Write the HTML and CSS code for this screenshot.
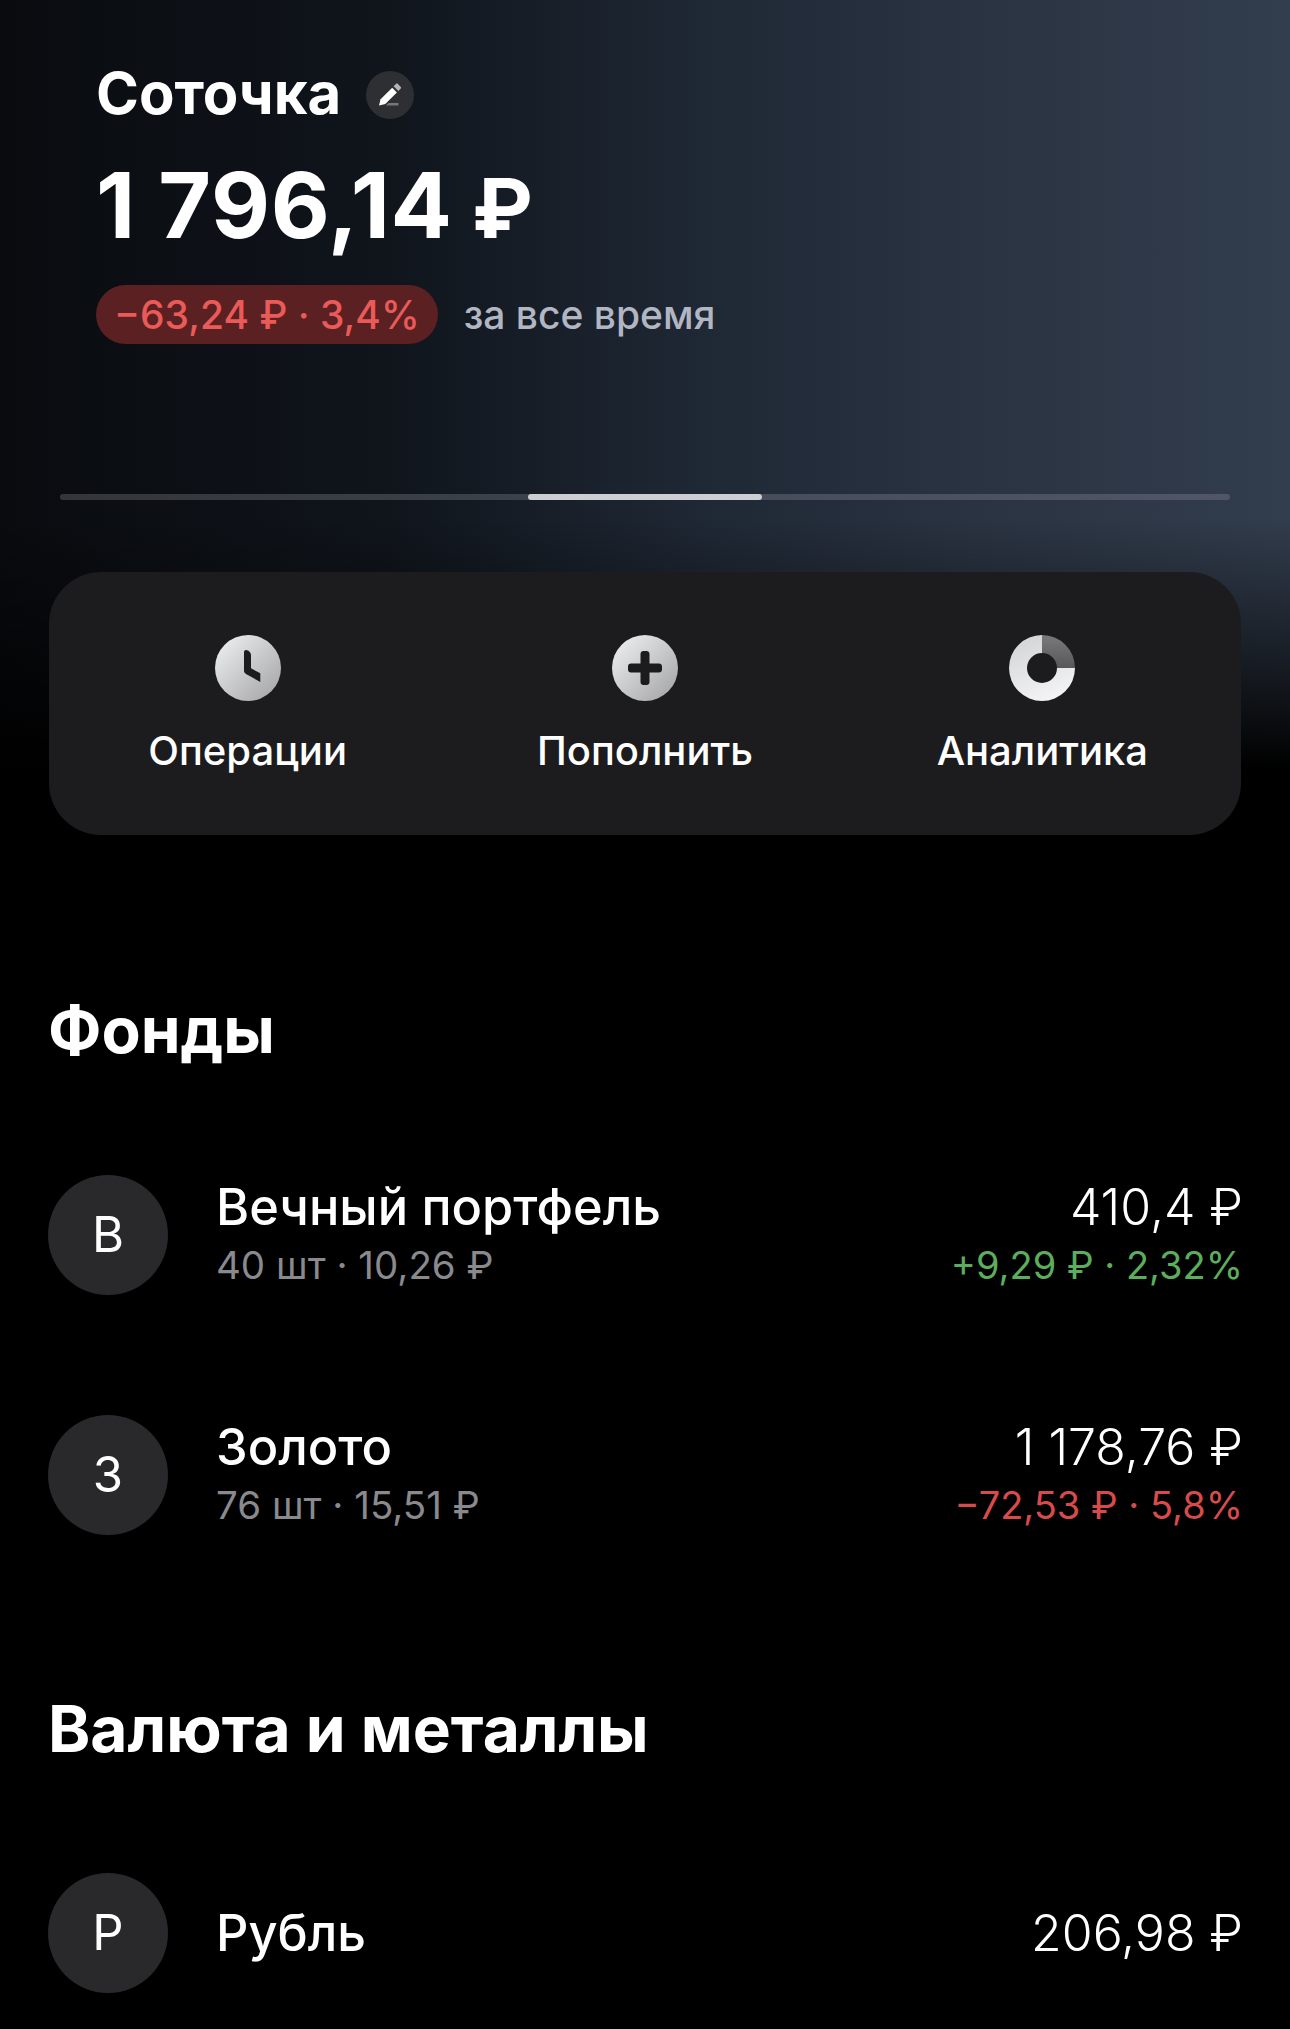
FILE: index.html
```html
<!DOCTYPE html>
<html lang="ru">
<head>
<meta charset="UTF-8">
<meta name="viewport" content="width=device-width, initial-scale=1.0">
<title>Соточка</title>
<link rel="stylesheet" href="styles.css">
</head>
<body>
    <section class="hero">
        <div class="summary">
            <div class="title-row">
                <h1>Соточка</h1>
                <span class="edit-btn">
                    <svg width="48" height="48" viewBox="0 0 48 48">
                        <path d="M13 34.500l1.600-6.200 11.600-11.600 4.700 4.700-11.600 11.600z" fill="#fff"/>
                        <path d="M27.600 15.300l2.300-2.300c.6-.6 1.400-.6 2 0l2.700 2.700c.6.600.6 1.400 0 2l-2.300 2.300z" fill="#b4b4b8"/>
                        <path d="M22.500 32h10v2.600h-12.600z" fill="#77777b"/>
                    </svg>
                </span>
            </div>
            <div class="total">1 796,14 <span class="total-rub">₽</span></div>
            <div class="change-row">
                <span class="change-pill">−63,24 ₽ · 3,4%</span>
                <span class="change-note">за все время</span>
            </div>
        </div>

        <div class="slider">
            <div class="slider-thumb"></div>
        </div>

        <div class="actions">
            <div class="action">
                <svg class="action-icon" width="66" height="66" viewBox="0 0 66 66">
                    <defs>
                        <linearGradient id="metal" x1="0.1" y1="0.1" x2="0.9" y2="0.9">
                            <stop offset="0" stop-color="#e9ebed"/>
                            <stop offset="1" stop-color="#a9a9ab"/>
                        </linearGradient>
                        <linearGradient id="donut-light" x1="0.2" y1="0" x2="0.6" y2="1">
                            <stop offset="0" stop-color="#d2d4d6"/>
                            <stop offset="1" stop-color="#f4f4f6"/>
                        </linearGradient>
                        <linearGradient id="donut-dark" x1="0" y1="0" x2="0" y2="1">
                            <stop offset="0" stop-color="#7a7a7c"/>
                            <stop offset="1" stop-color="#58585a"/>
                        </linearGradient>
                    </defs>
                    <circle cx="33" cy="33" r="33" fill="url(#metal)"/>
                    <path d="M29 17c0-1.200 1-2 2-2 2.800.2 5 2.500 5 5.300v13l9.300 5V47L31 39c-1.300-.7-2-1.800-2-3.200z" fill="#1c1c1e"/>
                </svg>
                <span class="action-label">Операции</span>
            </div>
            <div class="action">
                <svg class="action-icon" width="66" height="66" viewBox="0 0 66 66">
                    <circle cx="33" cy="33" r="33" fill="url(#metal)"/>
                    <path d="M28.500 19c0-1.700 1.300-3 3-3h3c1.700 0 3 1.300 3 3v9.500H47c1.700 0 3 1.300 3 3v3c0 1.700-1.300 3-3 3h-9.500V47c0 1.700-1.300 3-3 3h-3c-1.700 0-3-1.300-3-3v-9.500H19c-1.700 0-3-1.300-3-3v-3c0-1.700 1.300-3 3-3h9.500z" fill="#1c1c1e"/>
                </svg>
                <span class="action-label">Пополнить</span>
            </div>
            <div class="action">
                <svg class="action-icon" width="66" height="66" viewBox="0 0 66 66">
                    <path d="M33 0a33 33 0 1 0 33 33H48a15 15 0 1 1-15-15z" fill="url(#donut-light)"/>
                    <path d="M33 0a33 33 0 0 1 33 33H48a15 15 0 0 0-15-15z" fill="url(#donut-dark)"/>
                </svg>
                <span class="action-label">Аналитика</span>
            </div>
        </div>
    </section>

    <section class="group group-funds">
        <h2>Фонды</h2>
        <div class="asset">
            <div class="avatar">В</div>
            <div class="asset-info">
                <div class="asset-name">Вечный портфель</div>
                <div class="asset-sub">40 шт · 10,26 ₽</div>
            </div>
            <div class="asset-values">
                <div class="asset-price">410,4 ₽</div>
                <div class="asset-delta up">+9,29 ₽ · 2,32%</div>
            </div>
        </div>
        <div class="asset">
            <div class="avatar">З</div>
            <div class="asset-info">
                <div class="asset-name">Золото</div>
                <div class="asset-sub">76 шт · 15,51 ₽</div>
            </div>
            <div class="asset-values">
                <div class="asset-price">1 178,76 ₽</div>
                <div class="asset-delta down">−72,53 ₽ · 5,8%</div>
            </div>
        </div>
    </section>

    <section class="group group-currency">
        <h2>Валюта и металлы</h2>
        <div class="asset">
            <div class="avatar">Р</div>
            <div class="asset-info">
                <div class="asset-name">Рубль</div>
            </div>
            <div class="asset-values">
                <div class="asset-price">206,98 ₽</div>
            </div>
        </div>
    </section>
</body>
</html>
```
FILE: styles.css
```css
html, body {
    margin: 0;
    padding: 0;
    height: 2029px;
    overflow: hidden;
    background-color: #000;
}

body {
    font-family: Inter, "Noto Sans", sans-serif;
    color: #fff;
}

h1, h2 {
    margin: 0;
}

/* top block with the blue-grey glow */
.hero {
    height: 835px;
    box-sizing: border-box;
    padding: 0 49px;
    background:
        linear-gradient(to bottom, rgba(0, 0, 0, 0) 62%, rgba(0, 0, 0, 0.55) 80%, #000 92%),
        linear-gradient(to right, #090b0f 0%, #10151c 30%, #1f2835 55%, #2a3342 75%, #323d4d 100%);
}

.summary {
    height: 470px;
    box-sizing: border-box;
    padding: 59px 0 0 47px;
}

.title-row {
    display: flex;
    align-items: center;
    gap: 25px;
    height: 68px;
}

.title-row h1 {
    font-size: 58px;
    font-weight: 700;
    line-height: 68px;
}

.edit-btn {
    width: 48px;
    height: 48px;
    border-radius: 50%;
    background-color: #2d2f33;
    margin-top: 4px;
}

.total {
    height: 91px;
    margin-top: 33px;
    font-size: 91px;
    font-weight: 700;
    line-height: 91px;
    letter-spacing: 0.7px;
}

.total-rub {
    margin-left: -3px;
    font-size: 82px;
    line-height: 1;
}

.change-row {
    display: flex;
    align-items: center;
    gap: 26px;
    margin-top: 34px;
}

.change-pill {
    height: 59px;
    line-height: 59px;
    padding: 0 18px;
    border-radius: 30px;
    background-color: #5a2022;
    color: #ea5a58;
    font-size: 39px;
    font-weight: 500;
}

.change-note {
    color: #b2b6c2;
    font-size: 39px;
    font-weight: 500;
}

.slider {
    height: 6px;
    margin: 24px 11px 0;
    display: flex;
    justify-content: center;
    border-radius: 3px;
    background: linear-gradient(to right, #333539 0%, #3d4149 40%, #474d5b 60%, #505667 100%);
}

.slider-thumb {
    width: 234px;
    height: 6px;
    border-radius: 3px;
    background-color: #ccced1;
}

.actions {
    display: grid;
    grid-template-columns: repeat(3, 1fr);
    height: 263px;
    margin-top: 72px;
    border-radius: 52px;
    background-color: #1c1c1e;
}

.action {
    display: flex;
    flex-direction: column;
    align-items: center;
    padding-top: 63px;
}

.action-icon {
    display: block;
}

.action-label {
    margin-top: 27px;
    font-size: 40px;
    font-weight: 500;
    line-height: 46px;
}

/* lists */
.group {
    padding: 0 47px 0 48px;
}

.group h2 {
    font-size: 64px;
    font-weight: 700;
    line-height: 76px;
}

.group-funds {
    padding-top: 157px;
}

.group-funds h2 {
    margin-bottom: 107px;
}

.group-currency {
    padding-top: 36px;
}

.group-currency h2 {
    margin-bottom: 106px;
}

.asset {
    display: flex;
    align-items: center;
    gap: 48px;
    height: 120px;
    margin-bottom: 120px;
}

.avatar {
    width: 120px;
    height: 120px;
    flex-shrink: 0;
    border-radius: 50%;
    background-color: #29292b;
    font-size: 49px;
    line-height: 120px;
    text-align: center;
}

.asset-info {
    flex: 1;
}

.asset-name {
    font-size: 50.500px;
    font-weight: 500;
    line-height: 60px;
}

.asset-sub {
    margin: 5px 0;
    color: #8a8a8e;
    font-size: 38.500px;
    line-height: 46px;
}

.asset-values {
    text-align: right;
}

.asset-price {
    font-size: 50px;
    font-weight: 300;
    line-height: 60px;
}

.asset-delta {
    margin: 5px 0;
    font-size: 38px;
    line-height: 46px;
}

.up {
    color: #5cae5c;
}

.down {
    color: #d84b4b;
}
```
